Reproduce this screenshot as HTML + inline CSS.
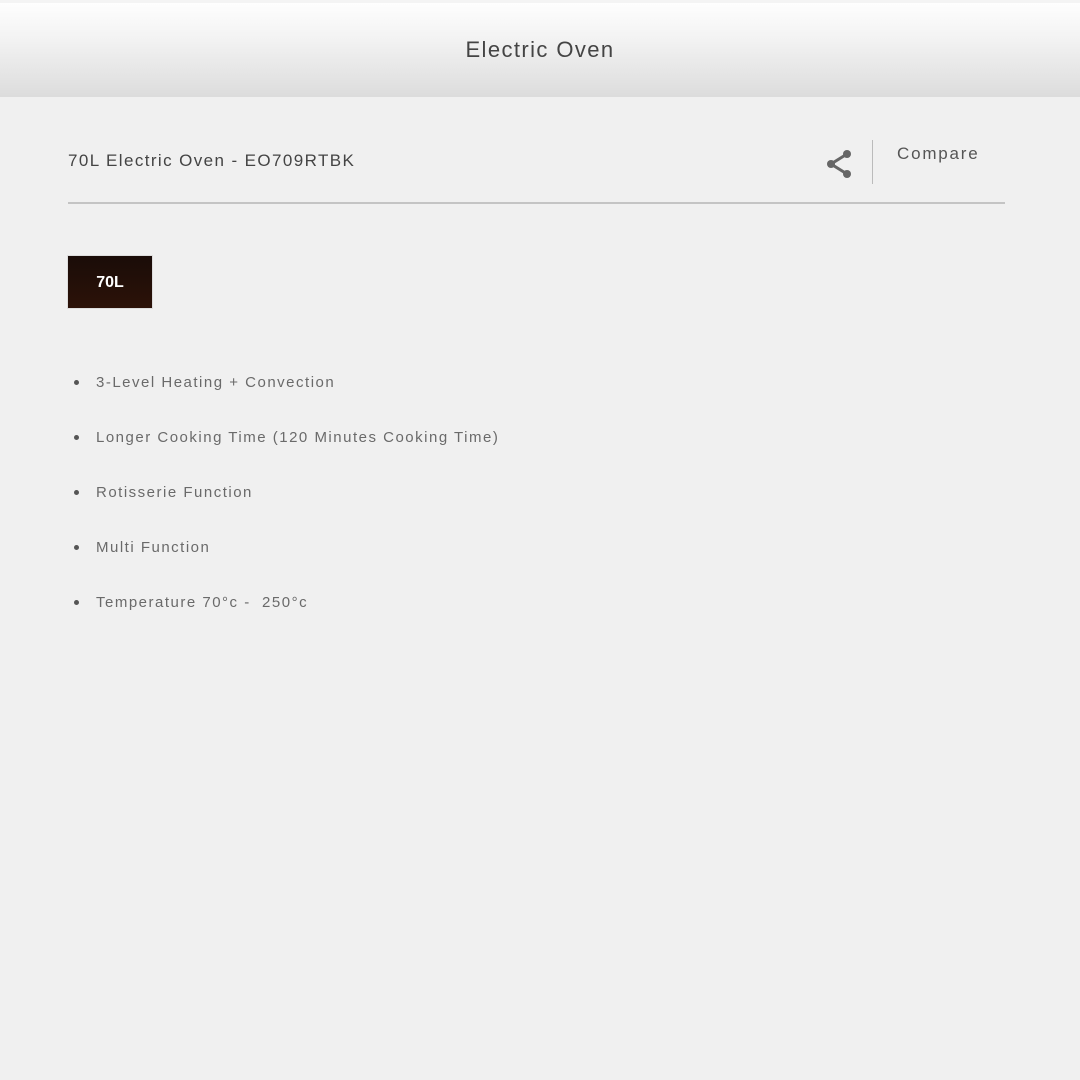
<!DOCTYPE html>
<html><head><style>
html,body{margin:0;padding:0}
body{width:1080px;height:1080px;background:#f0f0f0;font-family:"Liberation Sans",sans-serif;position:relative;overflow:hidden}
.hdr{position:absolute;left:0;top:3px;width:1080px;height:94px;background:linear-gradient(#fefefe,#f2f2f2 40%,#dcdcdc);}
.topw{position:absolute;left:0;top:0;width:1080px;height:3px;background:#f4f4f4}
.hdr span{position:absolute;left:0;right:0;top:34px;text-align:center;font-size:22px;color:#444;letter-spacing:1.4px}
.t{position:absolute;left:68px;top:151px;font-size:17px;color:#444;letter-spacing:1.4px}
.cmp{position:absolute;left:897px;top:144px;font-size:17px;color:#555;letter-spacing:1.8px}
.vl{position:absolute;left:872px;top:140px;width:1px;height:44px;background:#bbb}
.rule{position:absolute;left:68px;top:202px;width:937px;height:2px;background:#c4c4c4}
.badge{position:absolute;left:68px;top:256px;width:84px;height:52px;background:linear-gradient(#1a0c08,#2c1208);color:#fff;font-weight:bold;font-size:16px;text-align:center;line-height:54px;box-shadow:0 0 0 1px #ddd}
.li{position:absolute;left:96px;font-size:15px;color:#6a6a6a;letter-spacing:1.5px}
.li:before{content:"";position:absolute;left:-22px;top:6px;width:5px;height:5px;border-radius:50%;background:#555}
</style></head><body>
<div class="topw"></div>
<div class="hdr"><span>Electric Oven</span></div>
<div class="t">70L Electric Oven - EO709RTBK</div>
<svg style="position:absolute;left:823px;top:148px" width="32" height="32" viewBox="0 0 32 32">
<path d="M24 6 L8 16 L24 26" stroke="#666" stroke-width="3" fill="none"/>
<circle cx="24" cy="6" r="4" fill="#666"/><circle cx="8" cy="16" r="4" fill="#666"/><circle cx="24" cy="26" r="4" fill="#666"/></svg>
<div class="vl"></div>
<div class="cmp">Compare</div>
<div class="rule"></div>
<div class="badge">70L</div>
<div class="li" style="top:374px">3-Level Heating + Convection</div>
<div class="li" style="top:429px">Longer Cooking Time (120 Minutes Cooking Time)</div>
<div class="li" style="top:484px">Rotisserie Function</div>
<div class="li" style="top:539px">Multi Function</div>
<div class="li" style="top:594px">Temperature 70°c -&nbsp; 250°c</div>
</body></html>
